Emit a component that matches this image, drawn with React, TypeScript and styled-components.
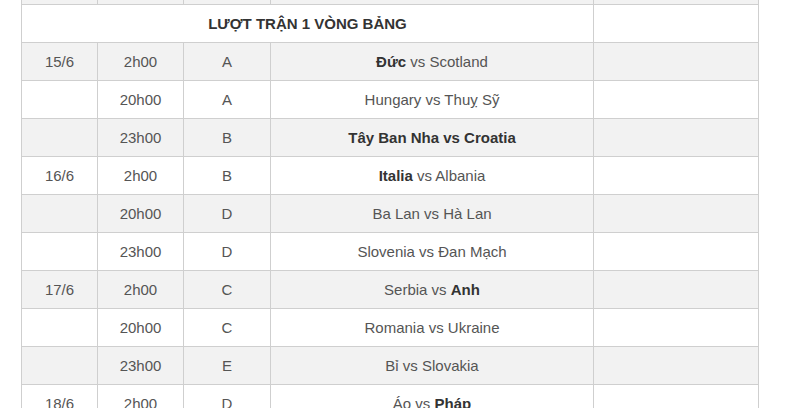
import React from "react";
import styled, { createGlobalStyle } from "styled-components";

const Global = createGlobalStyle`
  html, body { margin: 0; padding: 0; background: #fff; }
  body { font-family: "Liberation Sans", Arial, sans-serif; overflow: hidden; }
`;

const Page = styled.div`
  padding-left: 21px;
  width: 800px;
  height: 408px;
  box-sizing: border-box;
  overflow: hidden;
`;

const Table = styled.table`
  border-collapse: collapse;
  table-layout: fixed;
  width: 738px;
  font-size: 15px;
  color: #555;
`;

const Row = styled.tr<{ $striped?: boolean }>`
  background: ${(p) => (p.$striped ? "#f2f2f2" : "#ffffff")};
`;

const Cell = styled.td<{ $stub?: boolean }>`
  border: 1px solid #cfcfcf;
  padding: 0;
  text-align: center;
  line-height: ${(p) => (p.$stub ? "4px" : "37px")};
  height: ${(p) => (p.$stub ? "4px" : "37px")};
  white-space: nowrap;
  ${(p) => (p.$stub ? "border-top: none;" : "")}
`;

const Title = styled(Cell)`
  font-weight: bold;
  color: #333;
`;

const B = styled.b`
  color: #333;
  font-weight: bold;
`;

type Match = {
  date: string;
  time: string;
  group: string;
  match: React.ReactNode;
};

const matches: Match[] = [
  { date: "15/6", time: "2h00", group: "A", match: <><B>Đức</B> vs Scotland</> },
  { date: "", time: "20h00", group: "A", match: <>Hungary vs Thuỵ Sỹ</> },
  { date: "", time: "23h00", group: "B", match: <B>Tây Ban Nha vs Croatia</B> },
  { date: "16/6", time: "2h00", group: "B", match: <><B>Italia</B> vs Albania</> },
  { date: "", time: "20h00", group: "D", match: <>Ba Lan vs Hà Lan</> },
  { date: "", time: "23h00", group: "D", match: <>Slovenia vs Đan Mạch</> },
  { date: "17/6", time: "2h00", group: "C", match: <>Serbia vs <B>Anh</B></> },
  { date: "", time: "20h00", group: "C", match: <>Romania vs Ukraine</> },
  { date: "", time: "23h00", group: "E", match: <>Bỉ vs Slovakia</> },
  { date: "18/6", time: "2h00", group: "D", match: <>Áo vs <B>Pháp</B></> },
];

export default function App() {
  return (
    <Page>
      <Global />
      <Table>
        <colgroup>
          <col style={{ width: 76 }} />
          <col style={{ width: 86 }} />
          <col style={{ width: 87 }} />
          <col style={{ width: 323 }} />
          <col style={{ width: 165 }} />
        </colgroup>
        <tbody>
          <Row $striped>
            <Cell $stub />
            <Cell $stub />
            <Cell $stub />
            <Cell $stub />
            <Cell $stub />
          </Row>
          <Row>
            <Title colSpan={4}>LƯỢT TRẬN 1 VÒNG BẢNG</Title>
            <Cell />
          </Row>
          {matches.map((m, i) => (
            <Row key={i} $striped={i % 2 === 0}>
              <Cell>{m.date}</Cell>
              <Cell>{m.time}</Cell>
              <Cell>{m.group}</Cell>
              <Cell>{m.match}</Cell>
              <Cell />
            </Row>
          ))}
        </tbody>
      </Table>
    </Page>
  );
}
